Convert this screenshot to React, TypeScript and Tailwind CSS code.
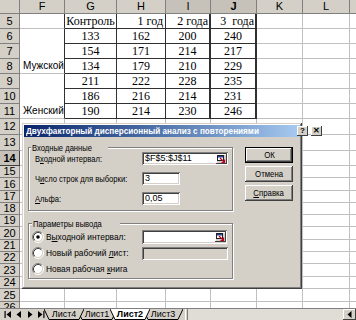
import React from 'react';

const colLetters = ['F', 'G', 'H', 'I', 'J', 'K', 'L', ''];

const tableData: Record<number, string[]> = {
  5: ['', 'Контроль', '1 год', '2 года', '3  года'],
  6: ['', '133', '162', '200', '240'],
  7: ['', '154', '171', '214', '217'],
  8: ['', '134', '179', '210', '229'],
  9: ['', '211', '222', '228', '235'],
  10: ['', '186', '216', '214', '231'],
  11: ['', '190', '214', '230', '246'],
};

const HDR =
  "flex items-center justify-center bg-[#d4d0c8] border-r border-b border-[#808080] text-[11px] leading-none text-black";
const HDR_SEL =
  "flex items-center justify-center bg-[#c6c2ba] border-r border-b border-[#808080] text-[11px] leading-none text-black";
const HDR_SEL_B =
  "flex items-center justify-center bg-[#c6c2ba] border-r border-b border-[#808080] text-[11px] leading-none text-black font-bold";
const ROWHDR_ACTIVE =
  "flex items-center justify-center bg-[#c6c2ba] border-r border-b border-[#404040] text-[11px] leading-none text-black font-bold";
const GRID = "bg-white border-r border-b border-[#c0c0c0]";
const LAST = "bg-white border-b border-[#c0c0c0]";
const F_TABLE = "bg-white border-r border-b border-r-[#303030] border-b-[#c0c0c0]";
const F_MERGED =
  "row-span-3 flex items-end pl-[3px] pb-[1px] bg-white border-r border-b border-r-[#303030] border-b-[#c0c0c0] text-[10px] leading-[12px] text-black";
const TCELL =
  "flex items-center justify-center bg-white border-r border-b border-[#303030] text-[12px] leading-none text-black font-['Liberation_Serif','Times_New_Roman',serif]";
const TCELL_T =
  "flex items-center justify-center bg-white border-r-2 border-b border-[#303030] text-[12px] leading-none text-black font-['Liberation_Serif','Times_New_Roman',serif]";
const TCELL_R =
  "flex items-center justify-end pr-[2px] bg-white border-r border-b border-[#303030] text-[12px] leading-none text-black whitespace-pre font-['Liberation_Serif','Times_New_Roman',serif]";
const TCELL_TR =
  "flex items-center justify-end pr-[1px] bg-white border-r-2 border-b border-[#303030] text-[12px] leading-none text-black whitespace-pre font-['Liberation_Serif','Times_New_Roman',serif]";

function Sheet() {
  const cells: React.ReactNode[] = [];
  cells.push(<div key="corner" className={HDR} />);
  colLetters.forEach((c, i) => {
    let cls = HDR;
    if (c === 'I') cls = HDR_SEL;
    if (c === 'J') cls = HDR_SEL_B;
    if (i === 7) cls = "bg-[#d4d0c8] border-b border-[#808080]";
    cells.push(
      <div key={'h' + i} className={cls}>
        {c}
      </div>
    );
  });
  for (let r = 5; r <= 26; r++) {
    cells.push(
      <div key={'r' + r} className={r === 14 ? ROWHDR_ACTIVE : HDR}>
        {r}
      </div>
    );
    for (let ci = 0; ci < 8; ci++) {
      const key = `c${r}-${ci}`;
      if (ci === 0 && r >= 5 && r <= 11) {
        if (r === 7 || r === 8 || r === 10 || r === 11) continue;
        if (r === 6 || r === 9) {
          cells.push(
            <div key={key} className={F_MERGED}>
              {r === 6 ? 'Мужской' : 'Женский'}
            </div>
          );
          continue;
        }
        cells.push(<div key={key} className={F_TABLE} />);
        continue;
      }
      if (r <= 11 && ci >= 1 && ci <= 4) {
        const text = tableData[r][ci];
        const thick = ci === 3 || ci === 4;
        const right = r === 5 && ci >= 2;
        let cls = TCELL;
        if (thick && right) cls = TCELL_TR;
        else if (thick) cls = TCELL_T;
        else if (right) cls = TCELL_R;
        cells.push(
          <div key={key} className={cls}>
            {text}
          </div>
        );
        continue;
      }
      cells.push(<div key={key} className={ci === 7 ? LAST : GRID} />);
    }
  }
  return (
    <div className="h-[308px] overflow-hidden">
      <div className="grid grid-cols-[20px_45px_52px_49px_45px_46px_46px_47px_6px] grid-rows-[14px_15px_15px_15px_15px_15px_15px_15px_16px_16px_15px_12px_13px_12px_12px_12px_13px_12px_12px_13px_12px_13px_12px]">
        {cells}
      </div>
    </div>
  );
}

function Radio({ checked }: { checked?: boolean }) {
  return (
    <svg width="12" height="12" viewBox="0 0 12 12" className="flex-none">
      <circle cx="6" cy="6" r="4.5" fill="#ffffff" />
      <path d="M2.11 9.89 A5.5 5.5 0 0 1 9.89 2.11" fill="none" stroke="#808080" strokeWidth="1" />
      <path d="M9.89 2.11 A5.5 5.5 0 0 1 2.11 9.89" fill="none" stroke="#ffffff" strokeWidth="1" />
      <path d="M2.82 9.18 A4.5 4.5 0 0 1 9.18 2.82" fill="none" stroke="#404040" strokeWidth="1" />
      <path d="M9.18 2.82 A4.5 4.5 0 0 1 2.82 9.18" fill="none" stroke="#d4d0c8" strokeWidth="1" />
      {checked && <circle cx="6" cy="6" r="1.8" fill="#000000" />}
    </svg>
  );
}

function RefIcon() {
  return (
    <div className="ml-auto mr-[1px] h-[10px] w-[11px] flex-none flex items-center justify-center bg-[#d4d0c8] shadow-[inset_-1px_-1px_0_#404040,inset_1px_1px_0_#ffffff]">
      <svg width="9" height="8" viewBox="0 0 9 8">
        <rect x="0.5" y="0.5" width="6" height="5" fill="#ffffff" stroke="#202020" strokeWidth="1" />
        <rect x="1" y="1" width="5" height="1.5" fill="#2040a0" />
        <path d="M3 3 L7.5 7.5 M7.5 4.5 L7.5 7.5 L4.5 7.5" fill="none" stroke="#c00020" strokeWidth="1.2" />
      </svg>
    </div>
  );
}

const INPUT_W86 =
  "h-[13px] w-[86px] flex-none flex items-center bg-white pl-[3px] text-[9px] leading-none text-black shadow-[inset_1px_1px_0_#808080,inset_-1px_-1px_0_#ffffff,inset_2px_2px_0_#404040,inset_-2px_-2px_0_#d4d0c8]";
const INPUT_W38 =
  "h-[13px] w-[38px] flex-none flex items-center bg-white pl-[3px] text-[9px] leading-none text-black shadow-[inset_1px_1px_0_#808080,inset_-1px_-1px_0_#ffffff,inset_2px_2px_0_#404040,inset_-2px_-2px_0_#d4d0c8]";
const INPUT_OUT =
  "h-[14px] w-[85px] flex-none flex items-center bg-white pl-[3px] text-[9px] leading-none text-black shadow-[inset_1px_1px_0_#808080,inset_-1px_-1px_0_#ffffff,inset_2px_2px_0_#404040,inset_-2px_-2px_0_#d4d0c8]";
const INPUT_DIS =
  "h-[13px] w-[86px] flex-none bg-[#d4d0c8] shadow-[inset_1px_1px_0_#808080,inset_-1px_-1px_0_#ffffff,inset_2px_2px_0_#404040,inset_-2px_-2px_0_#d4d0c8]";

const BTN =
  "h-[16px] w-[48px] flex items-center justify-center bg-[#d4d0c8] text-[9.5px] leading-none text-black shadow-[inset_-1px_-1px_0_#404040,inset_1px_1px_0_#ffffff,inset_-2px_-2px_0_#808080]";
const BTN_DEF =
  "h-[16px] w-[48px] flex items-center justify-center bg-[#d4d0c8] border border-black text-[9.5px] leading-none text-black shadow-[inset_-1px_-1px_0_#404040,inset_1px_1px_0_#ffffff,inset_-2px_-2px_0_#808080]";
const BTN_TXT = "inline-block scale-x-[0.82]";

const CAPBTN =
  "h-[10px] w-[11px] flex items-center justify-center bg-[#d4d0c8] text-[8px] font-bold leading-none text-black shadow-[inset_-1px_-1px_0_#404040,inset_1px_1px_0_#ffffff]";

const LBL1 = "w-[107px] flex-none text-[9.5px] leading-none whitespace-nowrap";
const LBL1_IN = "inline-block origin-left scale-x-[0.8]";
const LBL2 = "ml-[2px] w-[96px] flex-none text-[9.5px] leading-none whitespace-nowrap";
const LBL2_IN = "inline-block origin-left scale-x-[0.88]";
const GLBL =
  "absolute -top-[6px] bg-[#d4d0c8] px-[1px] text-[9.5px] leading-[11px] whitespace-nowrap";

function Dialog() {
  return (
    <div className="absolute left-[22px] top-[123px] w-[280px] h-[166px] bg-[#d4d0c8] p-[2px] flex flex-col text-black shadow-[inset_-1px_-1px_0_#404040,inset_1px_1px_0_#d4d0c8,inset_-2px_-2px_0_#808080,inset_2px_2px_0_#ffffff]">
      <div className="h-[12px] flex items-center bg-linear-to-r from-[#0a246a] to-[#a6caf0] pl-[2px] pr-[3px]">
        <span className="inline-block origin-left scale-x-[0.86] text-white font-bold text-[9.5px] leading-none whitespace-nowrap">
          Двухфакторный дисперсионный анализ с повторениями
        </span>
        <div className="ml-auto flex gap-[3px]">
          <div className={CAPBTN}>?</div>
          <div className={CAPBTN}>✕</div>
        </div>
      </div>
      <div className="flex pt-[10px] pl-[4px]">
        <div className="w-[205px] flex-none flex flex-col gap-[12px]">
          <div className="relative h-[64px] border border-[#808080] shadow-[1px_1px_0_#ffffff,inset_1px_1px_0_#ffffff] pt-[4px] pl-[6px] flex flex-col gap-[7px]">
            <span className={GLBL + " left-[2px]"}>
              <span className={LBL1_IN}>Входные данные</span>
            </span>
            <div className="flex items-center h-[13px]">
              <span className={LBL1}>
                <span className={LBL1_IN}>
                  В<span className="underline">х</span>одной интервал:
                </span>
              </span>
              <div className={INPUT_W86}>
                <span>$F$5:$J$11</span>
                <RefIcon />
              </div>
            </div>
            <div className="flex items-center h-[13px]">
              <span className={LBL1}>
                <span className={LBL1_IN}>
                  Ч<span className="underline">и</span>сло строк для выборки:
                </span>
              </span>
              <div className={INPUT_W38}>3</div>
            </div>
            <div className="flex items-center h-[13px]">
              <span className={LBL1}>
                <span className={LBL1_IN}>
                  <span className="underline">А</span>льфа:
                </span>
              </span>
              <div className={INPUT_W38}>0,05</div>
            </div>
          </div>
          <div className="relative h-[56px] border border-[#808080] shadow-[1px_1px_0_#ffffff,inset_1px_1px_0_#ffffff] pt-[5px] pl-[3px] flex flex-col">
            <span className={GLBL + " left-[3px]"}>
              <span className={LBL1_IN}>Параметры вывода</span>
            </span>
            <div className="flex items-center h-[16px]">
              <Radio checked />
              <span className={LBL2}>
                <span className={LBL2_IN}>
                  В<span className="underline">ы</span>ходной интервал:
                </span>
              </span>
              <div className={INPUT_OUT}>
                <RefIcon />
              </div>
            </div>
            <div className="flex items-center h-[16px]">
              <Radio />
              <span className={LBL2}>
                <span className={LBL2_IN}>
                  Новый рабочий <span className="underline">л</span>ист:
                </span>
              </span>
              <div className={INPUT_DIS} />
            </div>
            <div className="flex items-center h-[16px]">
              <Radio />
              <span className={LBL2}>
                <span className={LBL2_IN}>
                  Новая рабочая <span className="underline">к</span>нига
                </span>
              </span>
            </div>
          </div>
        </div>
        <div className="ml-[12px] flex flex-col gap-[3px]">
          <div className={BTN_DEF}>
            <span className={BTN_TXT}>ОК</span>
          </div>
          <div className={BTN}>
            <span className={BTN_TXT}>Отмена</span>
          </div>
          <div className={BTN}>
            <span className={BTN_TXT}>
              <span className="underline">С</span>правка
            </span>
          </div>
        </div>
      </div>
    </div>
  );
}

function NavBtn({ kind }: { kind: number }) {
  return (
    <div className="h-[10px] w-[10px] flex items-center justify-center">
      <svg width="8" height="7" viewBox="0 0 8 7">
        {kind === 0 && (
          <>
            <rect x="0.5" y="0" width="1.2" height="7" fill="#000" />
            <polygon points="7,0 7,7 2.5,3.5" fill="#000" />
          </>
        )}
        {kind === 1 && <polygon points="6,0 6,7 1.5,3.5" fill="#000" />}
        {kind === 2 && <polygon points="2,0 2,7 6.5,3.5" fill="#000" />}
        {kind === 3 && (
          <>
            <polygon points="1,0 1,7 5.5,3.5" fill="#000" />
            <rect x="6.3" y="0" width="1.2" height="7" fill="#000" />
          </>
        )}
      </svg>
    </div>
  );
}

function TabShape({ active }: { active?: boolean }) {
  return (
    <svg className="absolute inset-0" width="40" height="11" viewBox="0 0 40 11">
      <polygon points="0,0 40,0 35,10.5 5,10.5" fill={active ? '#ffffff' : '#d4d0c8'} />
      <polyline points="0,0 5,10.5 35,10.5 40,0" fill="none" stroke="#000" strokeWidth="1" />
    </svg>
  );
}

function TabBar() {
  return (
    <div className="h-[12px] flex bg-[#d4d0c8] border-t border-[#808080]">
      <div className="flex pl-[3px] gap-[1px] items-start">
        <NavBtn kind={0} />
        <NavBtn kind={1} />
        <NavBtn kind={2} />
        <NavBtn kind={3} />
      </div>
      <div className="flex">
        <div className="relative z-[4] -ml-[2px] h-[11px] w-[40px] flex items-center justify-center">
          <TabShape />
          <span className="relative text-[9px] leading-none">Лист4</span>
        </div>
        <div className="relative z-[3] -ml-[7px] h-[11px] w-[40px] flex items-center justify-center">
          <TabShape />
          <span className="relative text-[9px] leading-none">Лист1</span>
        </div>
        <div className="relative z-[10] -ml-[7px] h-[11px] w-[40px] flex items-center justify-center">
          <TabShape active />
          <span className="relative text-[9px] font-bold leading-none">Лист2</span>
        </div>
        <div className="relative z-[1] -ml-[7px] h-[11px] w-[40px] flex items-center justify-center">
          <TabShape />
          <span className="relative text-[9px] leading-none">Лист3</span>
        </div>
      </div>
      <div className="flex-1 flex ml-[2px]">
        <div className="w-[3px] bg-[#d4d0c8] shadow-[inset_-1px_0_0_#808080,inset_1px_0_0_#ffffff]" />
        <div className="flex-1 bg-[#e0ddd6]" />
        <div className="w-[13px] flex items-center justify-center bg-[#d4d0c8] shadow-[inset_-1px_-1px_0_#404040,inset_1px_1px_0_#ffffff]">
          <svg width="5" height="7" viewBox="0 0 5 7">
            <polygon points="4.5,0 4.5,7 0.5,3.5" fill="#000" />
          </svg>
        </div>
      </div>
    </div>
  );
}

export default function App() {
  return (
    <div className="relative w-[356px] h-[320px] overflow-hidden bg-white font-['Liberation_Sans',Arial,sans-serif] text-black">
      <Sheet />
      <TabBar />
      <Dialog />
    </div>
  );
}
